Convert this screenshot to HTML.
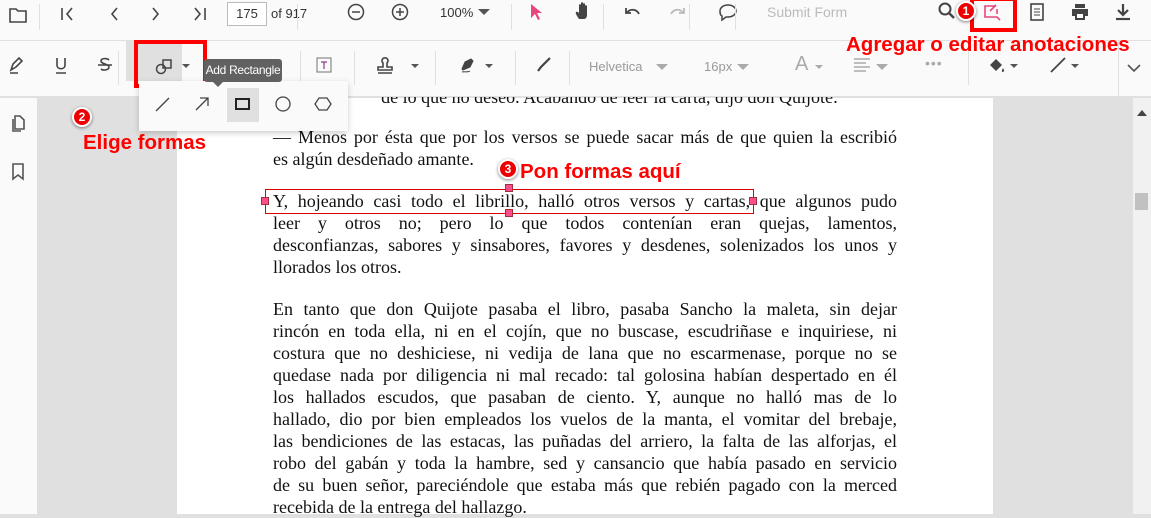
<!DOCTYPE html>
<html><head><meta charset="utf-8"><style>
*{margin:0;padding:0;box-sizing:border-box}
body{width:1151px;height:514px;overflow:hidden;position:relative;background:#e0e0e0;font-family:"Liberation Sans",sans-serif}
.a{position:absolute}
#tb1{left:0;top:0;width:1151px;height:41px;background:#fafafa;border-bottom:1px solid #e0e0e0;z-index:5}
#tb2{left:0;top:41px;width:1151px;height:56px;background:#fafafa;border-bottom:1px solid #e0e0e0;z-index:5}
.sep{position:absolute;width:1px;background:#e0e0e0}
#side{left:0;top:98px;width:38px;height:416px;background:#fafafa;border-right:1px solid #e0e0e0}
#page{left:177px;top:98px;width:816px;height:416px;background:#fff}
#sb{left:1133px;top:98px;width:18px;height:416px;background:#f1f1f1}
.ln{position:absolute;left:273px;width:624px;font-family:"Liberation Serif",serif;font-size:18px;color:#111;text-align:justify;text-align-last:justify;white-space:nowrap;line-height:22px}
.ln.l{text-align-last:left}
.red{color:#f00;font-weight:bold;font-size:20.5px;position:absolute;white-space:nowrap;z-index:10}
.badge{position:absolute;width:20px;height:20px;border-radius:50%;background:#e00;color:#fff;font-weight:bold;font-size:12px;text-align:center;line-height:17px;border:2px solid #fff;box-shadow:0 1px 3px rgba(0,0,0,.5);z-index:10}
.h{position:absolute;width:8px;height:8px;background:#ff4f8a;border:1px solid #a0303f}
svg{position:absolute}
.pop{z-index:8}
</style></head><body>
<div id="side" class="a">
<svg style="left:9px;top:16px" width="18" height="20"><path d="M6 2h5l4 4v9H6zM4 5v12h8" fill="none" stroke="#555" stroke-width="1.6"/></svg>
<svg style="left:10px;top:64px" width="16" height="20"><path d="M3 2h10v15l-5-4-5 4z" fill="none" stroke="#555" stroke-width="1.6"/></svg>
</div>
<div id="page" class="a"></div>
<div id="sb" class="a"><svg style="left:4px;top:12px" width="10" height="6"><path d="M0 6h10L5 0z" fill="#444"/></svg><div class="a" style="left:2px;top:95px;width:13px;height:17px;background:#c1c1c1"></div></div>

<div class="a" style="right:313px;top:86px;font-family:'Liberation Serif',serif;font-size:18px;line-height:22px;color:#111;white-space:nowrap">de lo que no deseo. Acabando de leer la carta, dijo don Quijote:</div>
<div class="ln" style="top:126px">— Menos por ésta que por los versos se puede sacar más de que quien la escribió</div>
<div class="ln l" style="top:148px">es algún desdeñado amante.</div>
<div class="ln" style="top:190px">Y, hojeando casi todo el librillo, halló otros versos y cartas, que algunos pudo</div>
<div class="ln" style="top:212px">leer y otros no; pero lo que todos contenían eran quejas, lamentos,</div>
<div class="ln" style="top:234px">desconfianzas, sabores y sinsabores, favores y desdenes, solenizados los unos y</div>
<div class="ln l" style="top:256px">llorados los otros.</div>
<div class="ln" style="top:298px">En tanto que don Quijote pasaba el libro, pasaba Sancho la maleta, sin dejar</div>
<div class="ln" style="top:320px">rincón en toda ella, ni en el cojín, que no buscase, escudriñase e inquiriese, ni</div>
<div class="ln" style="top:342px">costura que no deshiciese, ni vedija de lana que no escarmenase, porque no se</div>
<div class="ln" style="top:364px">quedase nada por diligencia ni mal recado: tal golosina habían despertado en él</div>
<div class="ln" style="top:386px">los hallados escudos, que pasaban de ciento. Y, aunque no halló mas de lo</div>
<div class="ln" style="top:408px">hallado, dio por bien empleados los vuelos de la manta, el vomitar del brebaje,</div>
<div class="ln" style="top:430px">las bendiciones de las estacas, las puñadas del arriero, la falta de las alforjas, el</div>
<div class="ln" style="top:452px">robo del gabán y toda la hambre, sed y cansancio que había pasado en servicio</div>
<div class="ln" style="top:474px">de su buen señor, pareciéndole que estaba más que rebién pagado con la merced</div>
<div class="ln l" style="top:496px">recebida de la entrega del hallazgo.</div>

<div id="tb1" class="a">
<svg style="left:8px;top:5px" width="20" height="20" viewBox="0 0 20 20"><path d="M2 4h6l2 2h8v11H2z" fill="none" stroke="#444" stroke-width="1.6"/></svg>
<div class="sep" style="left:39px;top:4px;height:26px"></div>
<svg style="left:58px;top:5px" width="20" height="18"><path d="M4 3v12M14 3l-5 6 5 6" fill="none" stroke="#444" stroke-width="1.6"/></svg>
<svg style="left:104px;top:5px" width="20" height="18"><path d="M13 3l-5 6 5 6" fill="none" stroke="#444" stroke-width="1.6"/></svg>
<svg style="left:146px;top:5px" width="20" height="18"><path d="M7 3l5 6-5 6" fill="none" stroke="#444" stroke-width="1.6"/></svg>
<svg style="left:190px;top:5px" width="20" height="18"><path d="M5 3l5 6-5 6M15 3v12" fill="none" stroke="#444" stroke-width="1.6"/></svg>
<div class="a" style="left:227px;top:2px;width:40px;height:24px;border:1px solid #bbb;background:#fff;font-size:13px;text-align:center;line-height:22px;color:#333">175</div>
<div class="a" style="left:271px;top:6px;font-size:13px;color:#333">of 917</div>
<div class="sep" style="left:297px;top:4px;height:26px"></div>
<svg style="left:346px;top:2px" width="20" height="20"><circle cx="10" cy="10" r="7.5" fill="none" stroke="#444" stroke-width="1.5"/><path d="M6 10h8" stroke="#444" stroke-width="1.5"/></svg>
<svg style="left:390px;top:2px" width="20" height="20"><circle cx="10" cy="10" r="7.5" fill="none" stroke="#444" stroke-width="1.5"/><path d="M6 10h8M10 6v8" stroke="#444" stroke-width="1.5"/></svg>
<div class="a" style="left:440px;top:5px;font-size:13px;color:#333">100%</div>
<svg style="left:478px;top:9px" width="12" height="8"><path d="M0 0h12L6 6z" fill="#555"/></svg>
<div class="sep" style="left:511px;top:4px;height:26px"></div>
<svg style="left:528px;top:2px" width="16" height="20"><path d="M3 2l11 9h-5l3 6-2 1-3-6-4 4z" fill="#e8467c"/></svg>
<svg style="left:574px;top:1px" width="20" height="20"><path d="M5 18c-2-3-4-6-3-7s2 0 3 1V4c0-1 2-1 2 0v6V2c0-1 2-1 2 0v8V3c0-1 2-1 2 0v7V5c0-1 2-1 2 0v9c0 2-1 4-3 4z" fill="#444"/></svg>
<div class="sep" style="left:603px;top:4px;height:26px"></div>
<svg style="left:623px;top:3px" width="20" height="18"><path d="M3 5v5h5M4 10c2-4 9-5 12 1" fill="none" stroke="#444" stroke-width="1.8"/></svg>
<svg style="left:667px;top:3px" width="20" height="18"><path d="M17 5v5h-5M16 10c-2-4-9-5-12 1" fill="none" stroke="#bbb" stroke-width="1.8"/></svg>
<div class="sep" style="left:689px;top:4px;height:26px"></div>
<svg style="left:718px;top:2px" width="20" height="20"><path d="M10 3c5 0 8 3 8 6s-3 6-8 6H8l-4 3v-4c-2-1-2-3-2-5 0-3 3-6 8-6z" fill="none" stroke="#444" stroke-width="1.5"/></svg>
<div class="sep" style="left:735px;top:4px;height:26px"></div>
<div class="a" style="left:767px;top:4px;font-size:14px;color:#bbb">Submit Form</div>
<svg style="left:937px;top:1px" width="20" height="20"><circle cx="8" cy="8" r="5.5" fill="none" stroke="#444" stroke-width="2"/><path d="M12 12l5 5" stroke="#444" stroke-width="2.4"/></svg>
<div class="a" style="left:970px;top:-3px;width:47px;height:35px;border:4px solid #f00"></div>
<svg style="left:983px;top:3px" width="20" height="18"><path d="M13 3H2v11h12l3 3M14 6v5" fill="none" stroke="#e8467c" stroke-width="1.6"/><path d="M7 8l6-6" stroke="#e8467c" stroke-width="1.6"/></svg>
<svg style="left:1027px;top:2px" width="20" height="20"><rect x="4" y="2" width="12" height="16" fill="none" stroke="#444" stroke-width="1.6"/><path d="M7 7h6M7 10h6M7 13h6" stroke="#444"/></svg>
<svg style="left:1070px;top:2px" width="20" height="20"><path d="M5 2h10v4H5zM2 7h16v7h-3v4H5v-4H2z" fill="#444"/><rect x="7" y="12" width="6" height="4" fill="#fff"/></svg>
<svg style="left:1113px;top:2px" width="20" height="20"><path d="M10 2v10M5 8l5 5 5-5" fill="none" stroke="#444" stroke-width="2.2"/><path d="M3 17h14" stroke="#444" stroke-width="2.2"/></svg>
</div>

<div id="tb2" class="a">
<svg style="left:7px;top:15px" width="20" height="20"><path d="M4 14l2-6 6-6 3 3-6 6zM3 17h8" fill="none" stroke="#444" stroke-width="1.6"/></svg>
<svg style="left:52px;top:14px" width="20" height="20"><path d="M5 3v7c0 5 8 5 8 0V3M4 18h10" fill="none" stroke="#444" stroke-width="1.6"/></svg>
<svg style="left:95px;top:14px" width="20" height="20"><path d="M14 5c-2-2-8-2-8 1s8 3 8 6-6 4-8 2M3 10h14" fill="none" stroke="#444" stroke-width="1.6"/></svg>
<div class="sep" style="left:118px;top:10px;height:34px"></div>
<div class="a" style="left:126px;top:0;width:56px;height:40px;background:#e0e0e0"></div>
<div class="a" style="left:134px;top:-1px;width:73px;height:48px;border:4px solid #f00"></div>
<svg style="left:154px;top:14px" width="22" height="22"><circle cx="7" cy="14" r="4.5" fill="none" stroke="#444" stroke-width="1.5"/><rect x="9" y="5" width="8" height="8" fill="none" stroke="#444" stroke-width="1.5"/></svg>
<svg style="left:182px;top:23px" width="8" height="5"><path d="M0 0h8L4 4z" fill="#555"/></svg>
<div class="sep" style="left:300px;top:10px;height:34px"></div>
<svg style="left:314px;top:14px" width="20" height="20"><rect x="3" y="3" width="14" height="14" fill="none" stroke="#888" stroke-width="1.2"/><path d="M7 7h6M10 7v7" stroke="#8a3f8a" stroke-width="1.2"/></svg>
<div class="sep" style="left:354px;top:10px;height:34px"></div>
<svg style="left:375px;top:14px" width="20" height="22"><path d="M8 12V8a3 3 0 1 1 4 0v4h5v3H3v-3zM3 18h14" fill="none" stroke="#444" stroke-width="1.6"/></svg>
<svg style="left:411px;top:23px" width="8" height="5"><path d="M0 0h8L4 4z" fill="#555"/></svg>
<div class="sep" style="left:435px;top:10px;height:34px"></div>
<svg style="left:458px;top:14px" width="22" height="22"><path d="M4 14l3-7 6-3 2 2-3 6-7 3zM4 17c3-1 5 1 8-1" fill="#444" stroke="#444"/></svg>
<svg style="left:485px;top:23px" width="8" height="5"><path d="M0 0h8L4 4z" fill="#555"/></svg>
<div class="sep" style="left:515px;top:10px;height:34px"></div>
<svg style="left:534px;top:14px" width="20" height="20"><path d="M4 16l3-4 9-9" stroke="#444" stroke-width="2.2"/></svg>
<div class="sep" style="left:569px;top:10px;height:34px"></div>
<div class="a" style="left:589px;top:18px;font-size:13px;color:#999">Helvetica</div>
<svg style="left:656px;top:23px" width="12" height="7"><path d="M0 0h12L6 6z" fill="#aaa"/></svg>
<div class="a" style="left:704px;top:18px;font-size:13px;color:#999">16px</div>
<svg style="left:737px;top:23px" width="12" height="7"><path d="M0 0h12L6 6z" fill="#aaa"/></svg>
<div class="a" style="left:795px;top:12px;font-size:20px;color:#aaa">A</div>
<svg style="left:815px;top:24px" width="8" height="5"><path d="M0 0h8L4 4z" fill="#aaa"/></svg>
<svg style="left:853px;top:16px" width="18" height="16"><path d="M1 2h16M1 6h12M1 10h16M1 14h12" stroke="#aaa" stroke-width="1.5"/></svg>
<svg style="left:876px;top:23px" width="12" height="7"><path d="M0 0h12L6 6z" fill="#aaa"/></svg>
<div class="a" style="left:925px;top:14px;font-size:14px;color:#aaa;letter-spacing:1px">•••</div>
<div class="sep" style="left:968px;top:10px;height:34px"></div>
<svg style="left:987px;top:15px" width="20" height="20"><path d="M3 9l6-6 6 6-6 6zM16 12c1 2 2 3 0 4-2 0-1-2 0-4" fill="#444"/></svg>
<svg style="left:1010px;top:23px" width="8" height="5"><path d="M0 0h8L4 4z" fill="#555"/></svg>
<svg style="left:1048px;top:14px" width="20" height="20"><path d="M3 17L17 3" stroke="#444" stroke-width="1.8"/></svg>
<svg style="left:1071px;top:23px" width="8" height="5"><path d="M0 0h8L4 4z" fill="#555"/></svg>
<div class="sep" style="left:1118px;top:0;height:56px"></div>
<svg style="left:1127px;top:22px" width="14" height="10"><path d="M1 2l6 6 6-6" fill="none" stroke="#555" stroke-width="1.6"/></svg>
</div>

<div class="badge" style="left:956px;top:1px">1</div>
<div class="red" style="left:846px;top:33px">Agregar o editar anotaciones</div>

<div class="a" style="left:265px;top:189px;width:489px;height:25px;border:1px solid #d00"></div>
<div class="h" style="left:505px;top:184px"></div>
<div class="h" style="left:505px;top:209px"></div>
<div class="h" style="left:261px;top:197px"></div>
<div class="h" style="left:749px;top:197px"></div>
<div class="badge" style="left:498px;top:159px">3</div>
<div class="red" style="left:520px;top:160px">Pon formas aquí</div>

<div class="a pop" style="left:139px;top:81px;width:209px;height:50px;background:#fafafa;box-shadow:0 2px 6px rgba(0,0,0,.2)">
<svg style="left:14px;top:14px" width="20" height="20"><path d="M3 16L16 3" stroke="#444" stroke-width="1.3"/></svg>
<svg style="left:54px;top:13px" width="20" height="20"><path d="M3 16L15 4M7 4h8v8" fill="none" stroke="#444" stroke-width="1.3"/></svg>
<div class="a" style="left:88px;top:7px;width:32px;height:34px;background:#e0e0e0"></div>
<div class="a" style="left:96px;top:17px;width:15px;height:12px;border:2px solid #222"></div>
<svg style="left:134px;top:14px" width="20" height="20"><circle cx="10" cy="9" r="7" fill="none" stroke="#444" stroke-width="1.3"/></svg>
<svg style="left:174px;top:14px" width="20" height="20"><path d="M6 3h8l4 6-4 6H6L2 9z" fill="none" stroke="#444" stroke-width="1.3"/></svg>
</div>
<div class="a pop" style="left:204px;top:59px;width:78px;height:23px;background:#616161;border-radius:3px;color:#fff;font-size:12px;line-height:23px;text-align:center;white-space:nowrap;letter-spacing:-0.3px">Add Rectangle</div>
<svg class="pop" style="left:213px;top:82px" width="10" height="5"><path d="M0 0h10L5 5z" fill="#616161"/></svg>

<div class="badge" style="left:72px;top:107px">2</div>
<div class="red" style="left:83px;top:131px">Elige formas</div>
</body></html>
